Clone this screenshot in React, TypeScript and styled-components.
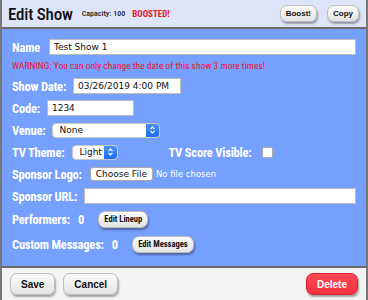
import React from "react";
import styled, { createGlobalStyle } from "styled-components";

const GlobalStyle = createGlobalStyle`
  html, body {
    margin: 0;
    padding: 0;
    background: #fff;
  }
`;

const Frame = styled.div`
  width: 368px;
  height: 300px;
  box-sizing: border-box;
  border-left: 2px solid #777;
  border-right: 2px solid #777;
  display: flex;
  flex-direction: column;
  font-family: "Roboto Condensed", "Roboto", sans-serif;
  overflow: hidden;
`;

const Header = styled.div`
  height: 29px;
  background: #dfe5f9;
  border-bottom: 2px solid #6c6c6c;
  display: flex;
  align-items: center;
  padding: 0 7px 0 6px;
  box-sizing: border-box;
  flex-shrink: 0;
`;

const Title = styled.div`
  font-size: 17px;
  font-weight: 500;
  color: #111;
  margin-right: 9px;
  letter-spacing: -0.2px;
`;

const Small = styled.span<{ $red?: boolean }>`
  font-size: ${(p) => (p.$red ? "9px" : "8px")};
  font-weight: ${(p) => (p.$red ? 700 : 500)};
  color: ${(p) => (p.$red ? "#f0112c" : "#222")};
  margin-right: 7px;
`;

const Spacer = styled.div`
  flex: 1;
`;

const PillButton = styled.button<{ $danger?: boolean; $size?: "s" | "m" | "l" }>`
  font-family: ${(p) =>
    p.$size === "s" ? '"Roboto Condensed", sans-serif' : '"Liberation Sans", Arial, sans-serif'};
  font-weight: bold;
  font-size: ${(p) => (p.$size === "l" ? "10px" : p.$size === "s" ? "8.5px" : "8px")};
  color: ${(p) => (p.$danger ? "#fff" : "#111")};
  background: ${(p) =>
    p.$danger
      ? "linear-gradient(#ff4a55, #f5303e)"
      : "linear-gradient(#fbfbfb, #e4e4e4)"};
  border: 1px solid ${(p) => (p.$danger ? "#d8202e" : "#bdbdbd")};
  border-radius: 7px;
  box-shadow: 1px 2px 2px rgba(0, 0, 0, 0.35);
  padding: 0 ${(p) => (p.$size === "l" ? "10px" : "5px")};
  height: ${(p) => (p.$size === "l" ? "22px" : "17px")};
  margin-left: ${(p) => (p.$size === "l" ? "0" : "10px")};
  cursor: pointer;
`;

const Body = styled.div`
  flex: 1;
  background: #75a0fd;
  padding: 7px 10px 0 8px;
  display: flex;
  flex-direction: column;
`;

const Row = styled.div<{ $h?: number }>`
  display: flex;
  align-items: center;
  height: ${(p) => p.$h ?? 22}px;
`;

const Label = styled.span`
  color: #fff;
  font-weight: bold;
  font-size: 12.5px;
  letter-spacing: -0.2px;
  white-space: nowrap;
  margin-left: 2px;
`;

const Count = styled.span`
  color: #fff;
  font-weight: bold;
  font-size: 12.5px;
  margin-left: 8px;
  margin-right: 4px;
`;

const TextInput = styled.input<{ $w?: number; $ml?: number }>`
  box-sizing: border-box;
  height: 16px;
  width: ${(p) => (p.$w ? `${p.$w}px` : "auto")};
  flex: ${(p) => (p.$w ? "none" : 1)};
  min-width: 0;
  border: 1px solid #bbb;
  background: #fff;
  font-family: "DejaVu Sans", sans-serif;
  font-size: 9px;
  padding: 0 4px;
  margin-left: ${(p) => p.$ml ?? 8}px;
  color: #111;
`;

const Warning = styled.div`
  color: #f0112c;
  font-size: 9.5px;
  height: 17px;
  line-height: 16px;
  margin-left: 2px;
  white-space: nowrap;
`;

const Select = styled.div<{ $w: number; $ml?: number }>`
  box-sizing: border-box;
  width: ${(p) => p.$w}px;
  height: 15px;
  background: #fff;
  border-radius: 4px;
  border: 1px solid #c8c8c8;
  margin-left: ${(p) => p.$ml ?? 8}px;
  display: flex;
  align-items: center;
  font-family: "DejaVu Sans", sans-serif;
  font-size: 9px;
  color: #111;
  padding-left: 6px;
  position: relative;
  overflow: hidden;
`;

const SelectArrow = styled.div`
  position: absolute;
  right: 0;
  top: 0;
  bottom: 0;
  width: 13px;
  background: linear-gradient(#4d8ff8, #1d6ef3);
  display: flex;
  align-items: center;
  justify-content: center;
`;

const Checkbox = styled.div`
  width: 9px;
  height: 9px;
  background: #fff;
  border-radius: 2px;
  border: 1px solid #aaa;
  margin-left: 10px;
`;

const FileButton = styled.div`
  height: 14px;
  box-sizing: border-box;
  background: #fff;
  border: 1px solid #aaa;
  border-radius: 3px;
  padding: 0 5px;
  font-family: "DejaVu Sans", sans-serif;
  font-size: 9px;
  display: flex;
  align-items: center;
  margin-left: 8px;
  color: #111;
`;

const FileNote = styled.span`
  color: #fff;
  font-family: "DejaVu Sans", sans-serif;
  font-size: 8.5px;
  margin-left: 3px;
`;

const Footer = styled.div`
  height: 34px;
  flex-shrink: 0;
  background: #f4f4f4;
  border-top: 2px solid #6c6c6c;
  display: flex;
  align-items: center;
  gap: 8px;
  padding: 0 8px;
  box-sizing: border-box;
`;

const Arrows = () => (
  <svg width="7" height="10" viewBox="0 0 7 10">
    <path d="M1.5 4 L3.5 2 L5.5 4 M1.5 6 L3.5 8 L5.5 6" stroke="#fff" strokeWidth="1.2" fill="none" />
  </svg>
);

const App = () => {
  return (
    <>
      <GlobalStyle />
      <Frame>
        <Header>
          <Title>Edit Show</Title>
          <Small>Capacity: 100</Small>
          <Small $red>BOOSTED!</Small>
          <Spacer />
          <PillButton>Boost!</PillButton>
          <PillButton>Copy</PillButton>
        </Header>
        <Body>
          <Row>
            <Label>Name</Label>
            <TextInput $ml={9} defaultValue="Test Show 1" />
          </Row>
          <Warning>WARNING: You can only change the date of this show 3 more times!</Warning>
          <Row>
            <Label>Show Date:</Label>
            <TextInput $w={108} $ml={7} defaultValue="03/26/2019 4:00 PM" />
          </Row>
          <Row>
            <Label>Code:</Label>
            <TextInput $w={87} $ml={7} defaultValue="1234" />
          </Row>
          <Row>
            <Label>Venue:</Label>
            <Select $w={108} $ml={7}>
              None
              <SelectArrow>
                <Arrows />
              </SelectArrow>
            </Select>
          </Row>
          <Row>
            <Label>TV Theme:</Label>
            <Select $w={46}>
              Light
              <SelectArrow>
                <Arrows />
              </SelectArrow>
            </Select>
            <Label style={{ marginLeft: 50 }}>TV Score Visible:</Label>
            <Checkbox />
          </Row>
          <Row>
            <Label>Sponsor Logo:</Label>
            <FileButton>Choose File</FileButton>
            <FileNote>No file chosen</FileNote>
          </Row>
          <Row>
            <Label>Sponsor URL:</Label>
            <TextInput $ml={7} />
          </Row>
          <Row $h={24}>
            <Label>Performers:</Label>
            <Count>0</Count>
            <PillButton $size="s">Edit Lineup</PillButton>
          </Row>
          <Row $h={26}>
            <Label>Custom Messages:</Label>
            <Count>0</Count>
            <PillButton $size="s">Edit Messages</PillButton>
          </Row>
        </Body>
        <Footer>
          <PillButton $size="l">Save</PillButton>
          <PillButton $size="l">Cancel</PillButton>
          <Spacer />
          <PillButton $size="l" $danger>Delete</PillButton>
        </Footer>
      </Frame>
    </>
  );
};

export default App;
